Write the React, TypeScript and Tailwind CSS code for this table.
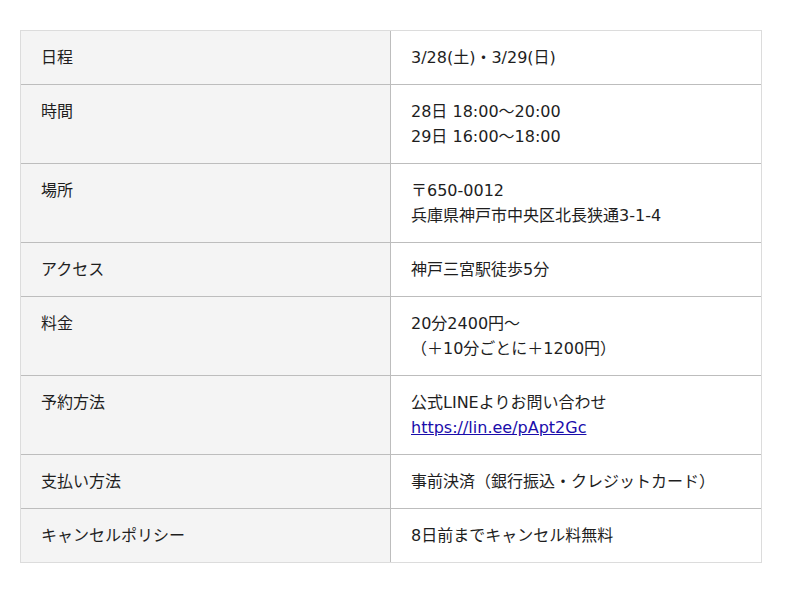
import React from "react";

const rows: { label: string; value: React.ReactNode[] }[] = [
  { label: "日程", value: ["3/28(土)・3/29(日)"] },
  { label: "時間", value: ["28日 18:00〜20:00", "29日 16:00〜18:00"] },
  { label: "場所", value: ["〒650-0012", "兵庫県神戸市中央区北長狭通3-1-4"] },
  { label: "アクセス", value: ["神戸三宮駅徒歩5分"] },
  { label: "料金", value: ["20分2400円〜", "（＋10分ごとに＋1200円）"] },
  {
    label: "予約方法",
    value: [
      "公式LINEよりお問い合わせ",
      <a key="l" href="#" className="text-[#1a0dab] underline">https://lin.ee/pApt2Gc</a>,
    ],
  },
  { label: "支払い方法", value: ["事前決済（銀行振込・クレジットカード）"] },
  { label: "キャンセルポリシー", value: ["8日前までキャンセル料無料"] },
];

export default function App() {
  return (
    <div
      className="bg-white w-[800px] h-[593px] pt-[30px] pl-[20px] text-[16px] leading-[25px] text-[#1e1e1e]"
      style={{ fontFamily: '"DejaVu Sans", "Noto Sans CJK JP", sans-serif' }}
    >
      <div className="w-[742px] border border-[#dcdcdc]">
        {rows.map((r, i) => (
          <div
            key={i}
            className={`grid grid-cols-[370px_1fr] ${i > 0 ? "border-t border-[#bdbdbd]" : ""}`}
          >
            <div className="bg-[#f4f4f4] border-r border-[#bdbdbd] px-[20px] py-[14px]">{r.label}</div>
            <div className="px-[20px] py-[14px]">
              {r.value.map((v, j) => (
                <div key={j}>{v}</div>
              ))}
            </div>
          </div>
        ))}
      </div>
    </div>
  );
}
